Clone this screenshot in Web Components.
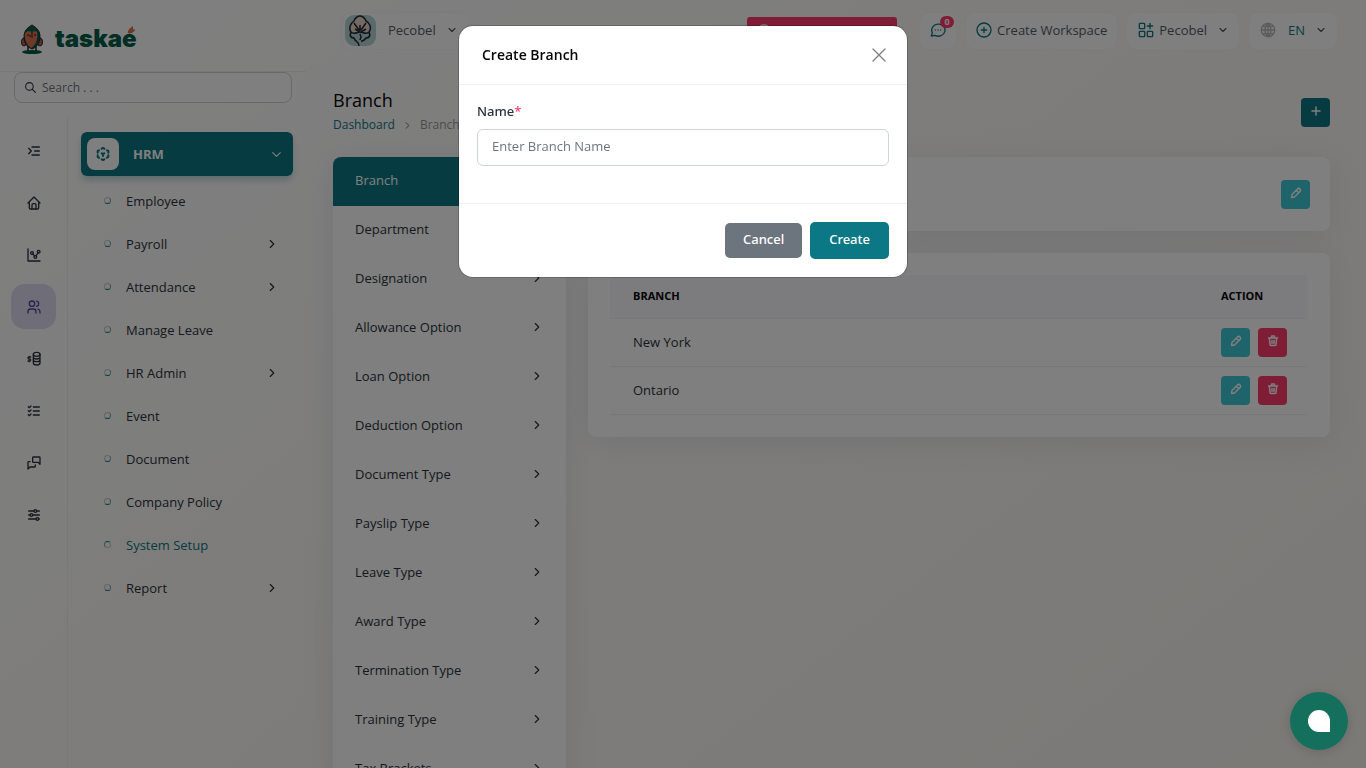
<!DOCTYPE html>
<html lang="en">
<head>
<meta charset="utf-8">
<meta name="viewport" content="width=device-width, initial-scale=1">
<title>Branch</title>
<style>
    * {
    box-sizing: border-box;
    }

    html, body {
    height: 100%;
    margin: 0;
    }

    body {
    --primary: #0c7785;
    --info: #3ec9d6;
    --danger: #ff3a6e;
    --ink: #293240;
    --line: #f1f1f1;
    overflow: hidden;
    font: 13px/20px "Open Sans", "Noto Sans", sans-serif;
    color: var(--ink);
    background: linear-gradient(141.55deg, #ffffff 3.46%, #f8f4ee 99.86%);
    }
</style>
</head>
<body>
<app-shell>
    <side-bar slot="sidebar"></side-bar>
    <top-bar slot="header"></top-bar>
    <page-heading heading="Branch" parent="Dashboard"></page-heading>
    <setup-page></setup-page>
</app-shell>

<modal-dialog heading="Create Branch">
    <text-field label="Name" placeholder="Enter Branch Name" required></text-field>
    <action-button slot="footer" tone="secondary">Cancel</action-button>
    <action-button slot="footer" tone="primary">Create</action-button>
</modal-dialog>
<chat-bubble></chat-bubble>

<script>
const define = (name, html, setup) => {
    const template = document.createElement('template');
    template.innerHTML = `<style>*, :host { box-sizing: border-box; }</style>` + html;

    customElements.define(name, class extends HTMLElement {
        constructor() {
            super();
            this.attachShadow({mode: 'open'});
            this.shadowRoot.appendChild(template.content.cloneNode(true));
        }

        connectedCallback() {
            if(setup) setup(this, this.shadowRoot);
        }
    });
};

// 24x24 line icons
const icons = {
    search: '<circle cx="10" cy="10" r="7"/><path d="M21 21l-6-6"/>',
    indent: '<path d="M20 6h-11M20 12h-7M20 18h-11M4 8l4 4-4 4"/>',
    home: '<path d="M5 12H3l9-9 9 9h-2M5 12v7a2 2 0 0 0 2 2h10a2 2 0 0 0 2-2v-7"/><path d="M9 21v-6a2 2 0 0 1 2-2h2a2 2 0 0 1 2 2v6"/>',
    chart: '<path d="M3 3v18h18"/><circle cx="9" cy="9" r="2"/><circle cx="19" cy="7" r="2"/><circle cx="14" cy="15" r="2"/><path d="M10.2 10.6l2.7 2.7M15.1 13.2l2.9-4.5"/>',
    users: '<circle cx="9" cy="7" r="4"/><path d="M3 21v-2a4 4 0 0 1 4-4h4a4 4 0 0 1 4 4v2M16 3.1a4 4 0 0 1 0 7.8M21 21v-2a4 4 0 0 0-3-3.9"/>',
    money: '<path d="M7 9H4.500c-.8 0-1.500.7-1.500 1.500S3.700 12 4.500 12h1c.8 0 1.500.7 1.500 1.500S6.300 15 5.500 15H3M5 15v1M5 8v1"/><ellipse cx="16" cy="5" rx="5" ry="3"/><path d="M11 5v4c0 1.700 2.200 3 5 3s5-1.300 5-3V5M11 9v4c0 1.700 2.200 3 5 3s5-1.300 5-3V9M11 13v5c0 1.700 2.200 3 5 3s5-1.300 5-3v-5"/>',
    checks: '<path d="M3.500 5.500L5 7l2.500-2.500M3.500 11.500L5 13l2.500-2.500M3.500 17.500L5 19l2.500-2.500M11 6h9M11 12h9M11 18h9"/>',
    messages: '<path d="M21 14l-3-3h-7a1 1 0 0 1-1-1V4a1 1 0 0 1 1-1h9a1 1 0 0 1 1 1v10zM14 15v2a1 1 0 0 1-1 1H6l-3 3V11a1 1 0 0 1 1-1h2"/>',
    sliders: '<circle cx="14" cy="6" r="2"/><circle cx="8" cy="12" r="2"/><circle cx="17" cy="18" r="2"/><path d="M4 6h8M16 6h4M4 12h2M10 12h10M4 18h11M19 18h1"/>',
    cube: '<path d="M6 17.600l-2-1.100V14M4 10V7.500l2-1.100M10 4.100L12 3l2 1.100M18 6.400l2 1.100V10M20 14v2.500l-2 1.120M14 19.900L12 21l-2-1.100M12 12l2-1.100M12 12v3M12 12l-2-1.100"/>',
    down: '<path d="M5 8.500l7 7 7-7"/>',
    right: '<path d="M9 6l6 6-6 6"/>',
    plus: '<path d="M12 4v16M4 12h16"/>',
    pencil: '<path d="M3 21l1-6L15 4a3.500 3.500 0 0 1 5 5L9 20zM13 7l4 4"/>',
    trash: '<path d="M3 6h18M10 11v6M14 11v6M5 7l1 12a2 2 0 0 0 2 2h8a2 2 0 0 0 2-2l1-12M9 6V3a1 1 0 0 1 1-1h4a1 1 0 0 1 1 1v3"/>',
    chat: '<path d="M2 21l1.500-5A10 9 0 1 1 7.500 20zM12 12v.01M8 12v.01M16 12v.01"/>',
    addCircle: '<circle cx="12" cy="12" r="10.500"/><path d="M8 12h8M12 8v8"/>',
    apps: '<rect x="2" y="2" width="8" height="8" rx="1"/><rect x="2" y="14" width="8" height="8" rx="1"/><rect x="14" y="14" width="8" height="8" rx="1"/><path d="M14 6h8M18 2v8"/>',
    globe: '<circle cx="12" cy="12" r="10"/><path d="M2 12h20M4 6.500h16M4 17.500h16M12 2v20M12 2c-6 5-6 15 0 20M12 2c6 5 6 15 0 20"/>',
    close: '<path d="M3 3l18 18M21 3L3 21"/>'
};

define('line-icon', `
<style>
    :host {
    display: inline-flex;
    flex: none;
    width: 16px;
    height: 16px;
    }

    svg {
    display: block;
    width: 100%;
    height: 100%;
    fill: none;
    stroke: currentColor;
    stroke-width: var(--stroke, 2);
    stroke-linecap: round;
    stroke-linejoin: round;
    }
</style>
<svg viewBox="0 0 24 24" aria-hidden="true"></svg>
`, (host, root) => {
    root.querySelector('svg').innerHTML = icons[host.getAttribute('name')] || '';
});

define('app-shell', `
<style>
    :host {
    display: grid;
    grid-template-columns: 306px minmax(0, 1fr);
    min-height: 100%;
    }

    main {
    padding: 12px 36px 0 27px;
    }
</style>
<slot name="sidebar"></slot>
<main>
    <slot name="header"></slot>
    <slot></slot>
</main>
`);

define('brand-logo', `
<style>
    :host {
    display: block;
    height: 72px;
    padding: 24px 21px 0;
    border-bottom: 1px solid var(--line);
    }

    a {
    display: flex;
    gap: 12px;
    text-decoration: none;
    color: #005c4b;
    font: 900 24px/30px Inter, Lato, sans-serif;
    }

    .name {
    position: relative;
    }

    .leaf {
    position: absolute;
    top: 2px;
    right: 2px;
    }
</style>
<a href="#">
    <svg width="22" height="30" viewBox="0 0 22 30">
        <ellipse cx="11" cy="28" rx="10" ry="2" fill="#005c4b"/>
        <path d="M7 22v5M15 22v5" stroke="#1d2430" stroke-width="1.500"/>
        <ellipse cx="3" cy="18" rx="2.500" ry="4" fill="#c95f3d" stroke="#1d2430"/>
        <ellipse cx="19" cy="18" rx="2.500" ry="4" fill="#c95f3d" stroke="#1d2430"/>
        <path d="M11 1c5 3 8 6 8 12s-4 11-8 12c-5-2-8-6-8-12S6 4 11 1z" fill="#005c4b" stroke="#1d2430"/>
        <path d="M4 9c2-2 5-2 7-1 2-1 4-1 5 0 1 7-1 13-6 16-4-3-7-8-6-15z" fill="#e1714d"/>
        <path d="M7 10v2M11 8v6M14 10v2M9 11v2" stroke="#1d2430"/>
    </svg>
    <span class="name">taskaé<svg class="leaf" width="7" height="8" viewBox="0 0 7 8"><path d="M5 0C2 2 0 4 1 8c3-1 6-2 6-5L5 4z" fill="#e1714d"/></svg></span>
</a>
`);

define('search-box', `
<style>
    :host {
    display: block;
    margin: 0 14px;
    }

    label {
    display: flex;
    align-items: center;
    gap: 5px;
    height: 31px;
    padding: 0 9px;
    border: 1px solid #ced4da;
    border-radius: 8px;
    background: #fff;
    }

    line-icon {
    width: 13px;
    height: 13px;
    }

    input {
    flex: 1;
    min-width: 0;
    padding: 0;
    border: 0;
    outline: 0;
    background: none;
    font: 12px/18px "Open Sans", sans-serif;
    }

    input::placeholder {
    color: #6c757d;
    }
</style>
<label><line-icon name="search"></line-icon><input type="search" placeholder="Search . . ."></label>
`);

define('rail-nav', `
<style>
    :host {
    display: block;
    border-right: 1px solid var(--line);
    padding: 11px 11px 0;
    }

    nav {
    display: grid;
    gap: 7px;
    }

    a {
    display: grid;
    place-items: center;
    height: 45px;
    border-radius: 14px;
    color: var(--ink);
    }

    a.active {
    background: #dedaee;
    color: #51459d;
    }
</style>
<nav></nav>
`, (host, root) => {
    root.querySelector('nav').innerHTML = ['indent', 'home', 'chart', 'users', 'money', 'checks', 'messages', 'sliders']
        .map(name => `<a href="#" class="${name == 'users' ? 'active' : ''}"><line-icon name="${name}"></line-icon></a>`)
        .join('');
});

define('menu-item', `
<style>
    :host {
    display: block;
    }

    a {
    display: flex;
    align-items: center;
    height: 43px;
    padding: 0 14px 0 23px;
    color: var(--ink);
    text-decoration: none;
    }

    :host([active]) a {
    color: var(--primary);
    }

    .dot {
    width: 7px;
    height: 7px;
    margin-right: 15px;
    border: 1px solid;
    border-color: #c4ccd2 #6ba9b1 var(--primary) #c4ccd2;
    border-radius: 50%;
    }

    :host([active]) .dot {
    border-color: var(--primary) #c4ccd2 #c4ccd2 #6ba9b1;
    }

    line-icon {
    display: none;
    width: 14px;
    height: 14px;
    margin-left: auto;
    }

    :host([more]) line-icon {
    display: block;
    }
</style>
<a href="#"><span class="dot"></span><slot></slot><line-icon name="right"></line-icon></a>
`);

define('side-menu', `
<style>
    :host {
    display: block;
    padding: 15px 13px 0;
    }

    button {
    display: flex;
    align-items: center;
    width: 100%;
    height: 44px;
    margin-bottom: 3px;
    padding: 0 10px 0 6px;
    border: 0;
    border-radius: 6px;
    background: var(--primary);
    color: #fff;
    box-shadow: 0 5px 7px -1px rgba(12, 119, 133, .3);
    font: 700 13px/20px "Open Sans", sans-serif;
    }

    .tile {
    display: grid;
    place-items: center;
    width: 32px;
    height: 32px;
    margin-right: 14px;
    border-radius: 8px;
    background: #fff;
    color: var(--primary);
    --stroke: 3;
    }

    .chevron {
    width: 13px;
    height: 13px;
    margin-left: auto;
    }
</style>
<button type="button"><span class="tile"><line-icon name="cube"></line-icon></span>HRM<line-icon class="chevron" name="down"></line-icon></button>
<nav>
    <menu-item>Employee</menu-item>
    <menu-item more>Payroll</menu-item>
    <menu-item more>Attendance</menu-item>
    <menu-item>Manage Leave</menu-item>
    <menu-item more>HR Admin</menu-item>
    <menu-item>Event</menu-item>
    <menu-item>Document</menu-item>
    <menu-item>Company Policy</menu-item>
    <menu-item active>System Setup</menu-item>
    <menu-item more>Report</menu-item>
</nav>
`);

define('side-bar', `
<style>
    :host {
    display: flex;
    flex-direction: column;
    min-height: 100vh;
    }

    .columns {
    display: grid;
    grid-template-columns: 68px minmax(0, 1fr);
    flex: 1;
    margin-top: 14px;
    }
</style>
<brand-logo></brand-logo>
<search-box></search-box>
<div class="columns">
    <rail-nav></rail-nav>
    <side-menu></side-menu>
</div>
`);

define('top-pill', `
<style>
    :host {
    display: block;
    position: relative;
    }

    button {
    display: flex;
    align-items: center;
    gap: 5px;
    height: 38px;
    padding: 0 10px 2px;
    border: 1px solid #f8f8f8;
    border-radius: 10px;
    background: #fff;
    color: #525b69;
    font: 13px/20px "Open Sans", sans-serif;
    white-space: nowrap;
    }

    ::slotted(line-icon) {
    color: var(--primary);
    }

    .down {
    display: none;
    width: 10px;
    height: 10px;
    margin-left: 6px;
    --stroke: 3;
    }

    :host([menu]) button {
    padding: 0 11px 2px;
    }

    :host([menu]) .down {
    display: block;
    }
</style>
<button type="button"><slot></slot><line-icon class="down" name="down"></line-icon></button>
<slot name="badge"></slot>
`);

define('top-bar', `
<style>
    :host {
    display: flex;
    align-items: center;
    gap: 8px;
    height: 38px;
    margin: 0 -8px 0 8px;
    }

    .avatar {
    margin: 0 0 0 -8px;
    }

    .avatar + span {
    margin: 0 0 0 7px;
    }

    .alert {
    display: flex;
    align-items: flex-start;
    width: 150px;
    height: 28px;
    margin: 0 14px 0 auto;
    padding: 7px 9px;
    border: 0;
    border-radius: 3px;
    background: var(--danger);
    color: #fff;
    }

    .badge {
    position: absolute;
    top: 4px;
    right: 3px;
    width: 14px;
    border-radius: 7px;
    background: var(--danger);
    color: #fff;
    font: 700 9px/12px "Open Sans", sans-serif;
    text-align: center;
    }

    .lang {
    margin-left: 7px;
    color: var(--primary);
    }

    top-pill line-icon.globe {
    color: #b8b8b8;
    }
</style>
<top-pill menu>
    <svg class="avatar" width="31" height="31" viewBox="0 0 31 31">
        <rect width="31" height="31" rx="9" fill="#b5d4d6"/>
        <path d="M15 17c-3 0-6 3-9 0-3-4 0-9 3-11 1-4 5-5 6-5s5 1 6 5c4 2 6 7 3 11-3 3-6 0-9 0z" fill="#e8d5c8"/>
        <path d="M15 17c-3 0-6 3-9 0-3-4 0-9 3-11 1-4 5-5 6-5s5 1 6 5c4 2 6 7 3 11-3 3-6 0-9 0zM15 10v6M9 8l5 7M21 8l-5 7M10 14l5 3M21 14l-5 3M6 17c-2 4 0 6 3 6 1 4 5 3 5 8M24 17c2 4 0 6-3 6-2 3-4 3-5 3M15 19l1 3-1 3" fill="none" stroke="#222832" stroke-width="1.500"/>
    </svg>
    <span>Pecobel</span>
</top-pill>
<button class="alert" type="button"><line-icon name="addCircle"></line-icon></button>
<top-pill>
    <line-icon name="chat"></line-icon>
    <span slot="badge" class="badge">0</span>
</top-pill>
<top-pill><line-icon name="addCircle"></line-icon><span>Create Workspace</span></top-pill>
<top-pill menu><line-icon name="apps"></line-icon><span>Pecobel</span></top-pill>
<top-pill menu><line-icon class="globe" name="globe"></line-icon><span class="lang">EN</span></top-pill>
`);

define('icon-button', `
<style>
    :host {
    display: block;
    }

    button {
    display: grid;
    place-items: center;
    width: 29px;
    height: 29px;
    padding: 0 0 3px;
    border: 0;
    border-radius: 4px;
    background: var(--tone, var(--primary));
    color: #fff;
    --stroke: 3;
    }

    line-icon {
    width: 12px;
    height: 12px;
    }
</style>
<button type="button"></button>
`, (host, root) => {
    const tone = host.getAttribute('tone');
    const icon = document.createElement('line-icon');
    icon.setAttribute('name', host.getAttribute('name'));
    root.querySelector('button').replaceChildren(icon);
    if(tone) {
        host.style.setProperty('--tone', `var(--${tone})`);
    }
});

define('page-heading', `
<style>
    :host {
    display: flex;
    align-items: center;
    justify-content: space-between;
    margin: 40px 0 23px;
    }

    h1 {
    margin: 0 0 6px;
    font-size: 18px;
    line-height: 20px;
    font-weight: 500;
    color: #060606;
    }

    nav {
    display: flex;
    align-items: center;
    gap: 7px;
    font-size: 12px;
    line-height: 18px;
    color: #999;
    }

    a {
    color: var(--primary);
    text-decoration: none;
    }

    line-icon {
    width: 11px;
    height: 11px;
    color: #666;
    }
</style>
<div>
    <h1></h1>
    <nav><a href="#"></a><line-icon name="right"></line-icon><span></span></nav>
</div>
<icon-button name="plus"></icon-button>
`, (host, root) => {
    root.querySelector('h1').textContent = host.getAttribute('heading');
    root.querySelector('a').textContent = host.getAttribute('parent');
    root.querySelector('span').textContent = host.getAttribute('heading');
});

define('panel-card', `
<style>
    :host {
    display: block;
    overflow: hidden;
    border-radius: 8px;
    background: #fff;
    box-shadow: 0 6px 30px rgba(182, 186, 203, .3);
    }
</style>
<slot></slot>
`);

define('setup-list', `
<style>
    :host {
    display: block;
    }

    a {
    display: flex;
    align-items: center;
    justify-content: space-between;
    height: 49px;
    padding: 0 22px 3px;
    color: var(--ink);
    text-decoration: none;
    }

    a.active {
    background: var(--primary);
    color: #fff;
    }

    line-icon {
    width: 14px;
    height: 14px;
    }
</style>
<nav></nav>
`, (host, root) => {
    root.querySelector('nav').innerHTML = ['Branch', 'Department', 'Designation', 'Allowance Option', 'Loan Option', 'Deduction Option',
        'Document Type', 'Payslip Type', 'Leave Type', 'Award Type', 'Termination Type', 'Training Type', 'Tax Brackets']
        .map((name, i) => `<a href="#" class="${i == 0 ? 'active' : ''}">${name}<line-icon name="right"></line-icon></a>`)
        .join('');
});

define('branch-table', `
<style>
    :host {
    display: block;
    padding: 22px 23px 22px 22px;
    }

    table {
    width: 100%;
    border-collapse: collapse;
    }

    th {
    height: 43px;
    padding: 0 23px;
    background: #f8f9fd;
    color: #060606;
    font-size: 11px;
    text-align: left;
    text-transform: uppercase;
    }

    td {
    height: 48px;
    padding: 0 20px 0 23px;
    }

    th, td {
    border-bottom: 1px solid var(--line);
    }

    td:last-child, th:last-child {
    width: 1px;
    padding-left: 22px;
    }

    .actions {
    display: flex;
    gap: 8px;
    }
</style>
<table>
    <thead><tr><th>Branch</th><th>Action</th></tr></thead>
    <tbody></tbody>
</table>
`, (host, root) => {
    root.querySelector('tbody').innerHTML = ['New York', 'Ontario'].map(name => `
        <tr>
            <td>${name}</td>
            <td><div class="actions">
                <icon-button name="pencil" tone="info"></icon-button>
                <icon-button name="trash" tone="danger"></icon-button>
            </div></td>
        </tr>`).join('');
});

define('setup-page', `
<style>
    :host {
    display: grid;
    grid-template-columns: minmax(0, 233fr) minmax(0, 742fr);
    gap: 22px;
    align-items: start;
    }

    .side {
    display: grid;
    gap: 22px;
    }

    .toolbar {
    display: flex;
    justify-content: flex-end;
    padding: 23px 20px 22px;
    }
</style>
<panel-card><setup-list></setup-list></panel-card>
<div class="side">
    <panel-card><div class="toolbar"><icon-button name="pencil" tone="info"></icon-button></div></panel-card>
    <panel-card><branch-table></branch-table></panel-card>
</div>
`);

define('text-field', `
<style>
    :host {
    display: block;
    }

    label {
    display: block;
    margin-bottom: 8px;
    font: 500 13px/20px "Noto Sans", sans-serif;
    }

    .star {
    color: var(--danger);
    }

    input {
    display: block;
    width: 100%;
    height: 37px;
    padding: 0 14px 3px;
    border: 1px solid #ced4da;
    border-radius: 6px;
    outline: 0;
    background: #fff;
    font: 13px/20px "Open Sans", sans-serif;
    }

    input::placeholder {
    color: #6c757d;
    }
</style>
<label for="field"><span class="text"></span><span class="star">*</span></label>
<input id="field" type="text" required>
`, (host, root) => {
    root.querySelector('.text').textContent = host.getAttribute('label');
    root.querySelector('input').placeholder = host.getAttribute('placeholder');
});

define('action-button', `
<style>
    :host {
    display: block;
    }

    button {
    height: 35px;
    padding: 0 18px 3px;
    border: 0;
    border-radius: 5px;
    background: #6c757d;
    color: #fff;
    font: 500 13px/20px "Noto Sans", sans-serif;
    }

    :host([tone="primary"]) button {
    height: 37px;
    padding: 0 19px 3px;
    background: var(--primary);
    }
</style>
<button type="button"><slot></slot></button>
`);

define('modal-dialog', `
<style>
    :host {
    position: fixed;
    inset: 0;
    display: flex;
    align-items: flex-start;
    justify-content: center;
    padding-top: 26px;
    background: rgba(0, 0, 0, .5);
    }

    section {
    width: 448px;
    max-width: 100%;
    border-radius: 14px;
    background: #fff;
    box-shadow: 0 0 0 1px rgba(0, 0, 0, .2);
    }

    header {
    display: flex;
    align-items: center;
    justify-content: space-between;
    height: 59px;
    padding: 0 20px 0 23px;
    border-bottom: 1px solid var(--line);
    }

    h2 {
    margin: 0;
    color: #060606;
    font-size: 14px;
    line-height: 20px;
    font-weight: 600;
    }

    header button {
    display: flex;
    padding: 0;
    border: 0;
    background: none;
    color: #7f7f7f;
    }

    .body {
    padding: 16px 18px 37px;
    }

    footer {
    display: flex;
    align-items: center;
    justify-content: flex-end;
    gap: 8px;
    padding: 18px;
    border-top: 1px solid var(--line);
    }
</style>
<section role="dialog" aria-labelledby="title">
    <header><h2 id="title"></h2><button type="button"><line-icon name="close"></line-icon></button></header>
    <div class="body"><slot></slot></div>
    <footer><slot name="footer"></slot></footer>
</section>
`, (host, root) => {
    root.querySelector('h2').textContent = host.getAttribute('heading');
});

define('chat-bubble', `
<style>
    :host {
    position: fixed;
    right: 18px;
    bottom: 18px;
    }

    button {
    display: grid;
    place-items: center;
    width: 58px;
    height: 58px;
    padding: 0;
    border: 0;
    border-radius: 50%;
    background: #14705c;
    box-shadow: 0 2px 12px rgba(0, 0, 0, .15);
    }
</style>
<button type="button"><svg width="22" height="22" viewBox="0 0 22 22"><path d="M11 0a11 11 0 0 1 11 11v11H11a11 11 0 0 1 0-22z" fill="#fff"/></svg></button>
`);
</script>
</body>
</html>
